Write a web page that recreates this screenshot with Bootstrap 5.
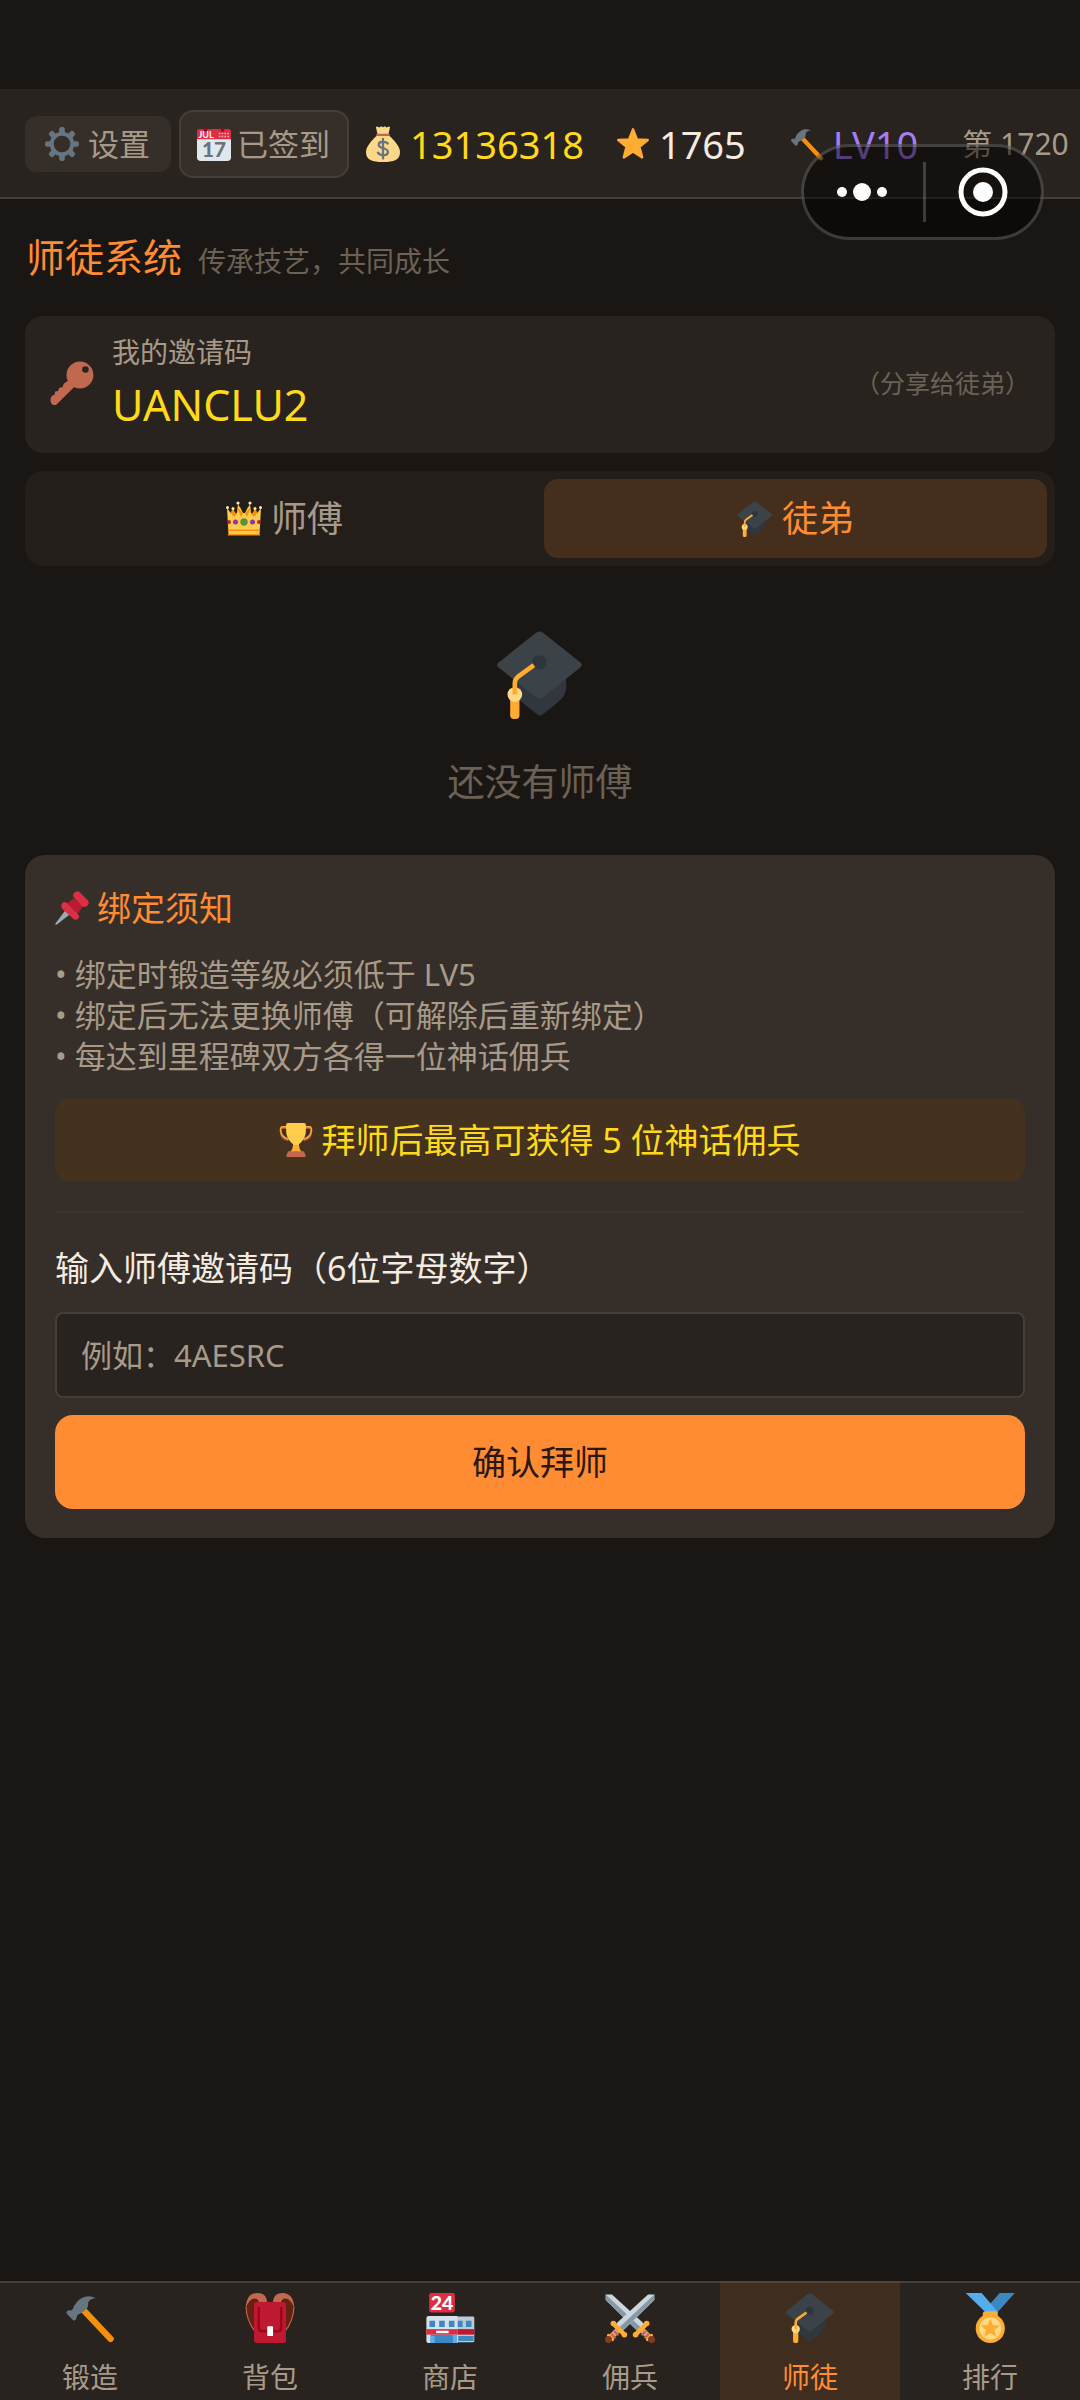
<!DOCTYPE html>
<html lang="zh-CN">
<head>
<meta charset="utf-8">
<meta name="viewport" content="width=device-width, initial-scale=1">
<title>师徒系统</title>
<link href="https://cdn.jsdelivr.net/npm/bootstrap@5.3.0/dist/css/bootstrap.min.css" rel="stylesheet">
<style>
:root{--ink:#1a1613;--bar:#28231f;--line:#443e39;--raised:#362f29;--muted:#a89a88;--dim:#6b6155;--orange:#ff8c33;--gold:#ffd91a;--light:#f5ebe0}
body{background:var(--ink);color:var(--light);font-family:"Noto Sans","Noto Sans CJK SC",sans-serif;font-size:31px;line-height:40px}
.page-shell{padding-top:89px}
.ico{display:block;flex:none;overflow:visible}
.i-34{width:34px;height:34px}.i-36{width:36px;height:36px}.i-44{width:44px;height:44px}.i-50{width:50px;height:50px}.i-88{width:88px;height:88px}
.top-bar{background:var(--bar);border-bottom:2px solid var(--line);height:110px;padding:2px 0 0 25px}
.bar-btn{background:var(--raised);color:var(--muted);border:0;border-radius:12px;font-size:31px;line-height:40px;gap:9px}
.bar-btn.set-btn{padding:8px 21px 8px 20px;margin-right:8px}
.bar-btn.sign-btn{padding:12px 17px 12px 16px;border:2px solid var(--line);border-radius:14px;gap:6px;margin-right:16px}
.stat{font-size:38px;line-height:40px;gap:9px;margin-right:44px}
.stat.coins{margin-right:32px}
.stage{font-size:30px}
.txt-gold{color:var(--gold)}.txt-muted{color:var(--muted)}.txt-dim{color:var(--dim)}.txt-orange{color:var(--orange)}.txt-violet{color:#a67cf5}
.capsule{top:144px;right:36px;width:243px;height:96px;border-radius:48px;background:rgba(0,0,0,.5);border:3px solid rgba(255,255,255,.2)}
.capsule button{background:none;border:0;padding:0 3px 0 0;height:60px}
.capsule button+button{border-left:3px solid rgba(255,255,255,.2);padding:0}
main{padding:0 25px}
.page-title{font-size:39px;line-height:50px;font-weight:400}
.fs-sub{font-size:28px;line-height:36px}
.fs-hint{font-size:25px;line-height:36px}
.title-row{padding:33px 0 34px 1px}
.code-box{background:#28231e;border-radius:18px;padding:18px 25px 22px;gap:18px}
.code-text{font-size:43px;line-height:52px;margin-top:9px}
.tab-box{background:#231e1a;border-radius:18px;padding:8px;margin-top:18px;gap:8px}
.tab-box .nav-link{color:var(--muted);font-size:36px;line-height:47px;padding:16px;border-radius:14px;gap:9px;border:0;background:none}
.tab-box .nav-link.active{background:#462e1d;color:var(--orange)}
.empty-box{padding:65px 0 49px;font-size:37px;line-height:48px;gap:39px}
.info-card{background:var(--raised);border:0;border-radius:20px;padding:29px 30px}
.fs-item{font-size:34px;line-height:48px;font-weight:400}
.rules{font-size:31px;line-height:41px;margin:22px 0}
.reward{background:#44321f;color:var(--gold);border-radius:14px;padding:17px;gap:8px}
.split{border-top:2px solid #3c342f;opacity:1;margin:30px 0 31px}
.code-input{background:#28231f;color:var(--light);border:2px solid var(--line);border-radius:8px;padding:21px 24px;font-size:31px;line-height:40px;margin:20px 0 17px}
.code-input::placeholder{color:var(--muted);opacity:1}
.code-input:focus{background:#28231f;color:var(--light);border-color:var(--orange);box-shadow:none}
.go-btn,.go-btn:hover{background:var(--orange);color:#2a1810;border:0;border-radius:18px;padding:23px}
.tab-bar{background:var(--bar);height:119px}
.tab-bar a{color:var(--muted);text-decoration:none;font-size:28px;line-height:36px;border-top:2px solid var(--line);padding:10px 0 0;gap:16px;flex:1 1 0}
.tab-bar a.active{background:#3f2d20;color:var(--orange);border-color:#58432f}
</style>
<script src="https://cdn.jsdelivr.net/npm/bootstrap@5.3.0/dist/js/bootstrap.bundle.min.js"></script>
</head>
<body>
<svg width="0" height="0" class="position-absolute" aria-hidden="true">
<defs>
<symbol id="cap" viewBox="0 0 36 36"><path fill="#31373d" d="M7.5 17h20.200c.8 1.500 1.100 3 1.100 5 0 3.500-1.300 5.500-3.600 7.200l-6 4.900q-1.200 1-2.400 0l-9.300-7.400z"/><path fill="#3b4349" d="M1.100 14.900q-1.300-1 0-2L16.200.8q1.600-1.200 3.200 0l15.100 12.100q1.300 1 0 2L19.400 27q-1.600 1.200-3.200 0z"/><circle cx="17.700" cy="12.900" r="3" fill="#2f363b"/><rect x="5.800" y="26" width="3.800" height="10" rx="1.500" fill="#ffac33"/><circle cx="7.700" cy="26" r="3" fill="#ffd983"/><path d="M15.500 14 8.900 18.800q-1.200 1-1.200 2.600V26" fill="none" stroke="#ffac33" stroke-width="1.900"/></symbol>
<symbol id="hammer" viewBox="0 0 36 36"><path d="M13 12 32.800 33" stroke="#f4900c" stroke-width="4.600" stroke-linecap="round"/><path fill="#66757f" d="M1 14.600q0-2 2-2.200l2 .1q.8-1 1.500-3.200Q8.500 5.500 12 3.600 17 1 22.400 3.800c-3.500 0-6 1.700-5.800 4.800q.2 1.800-2.200 3.900-2.200 2-4.600 2.800-1.500.4-1.400 2.500-.2 1.600-2.200 2.200z"/></symbol>
<symbol id="gear" viewBox="0 0 36 36"><g fill="#66757f"><rect x="15" y="0" width="6" height="36" rx="2.500"/><rect x="15" y="0" width="6" height="36" rx="2.500" transform="rotate(45 18 18)"/><rect x="15" y="0" width="6" height="36" rx="2.500" transform="rotate(90 18 18)"/><rect x="15" y="0" width="6" height="36" rx="2.500" transform="rotate(135 18 18)"/><circle cx="18" cy="18" r="13"/></g><circle cx="18" cy="18" r="8.800" fill="#362f29"/></symbol>
<symbol id="bag" viewBox="0 0 36 36"><path fill="#fdd888" d="M12 9.500C6 15 1 21 1 26c0 8 6 10 17 10s17-2 17-10c0-5-5-11-11-16.500z"/><path fill="#fdd888" d="M12.500 8 11 1.500q0-1.500 1.700-.8l1.800.7L16 .3l2 .9L20 .3l1.500 1.100 1.800-.7q1.700-.7 1.700.8L23.500 8z"/><path d="M12 8.700h12" stroke="#bf6952" stroke-width="2" stroke-linecap="round"/><path d="M22.700 17.500c-1.200-1.800-8.800-3.200-9 1.200 0 4.800 9.200 2.300 9.200 7.200 0 4.300-8 4-10 .8M18 13v19.500" fill="none" stroke="#67757f" stroke-width="2.300" stroke-linecap="round"/></symbol>
<symbol id="star" viewBox="0 0 36 36"><path fill="#ffac33" stroke="#ffac33" stroke-width="2.600" stroke-linejoin="round" d="m18 2.500 4.200 10.600 11.400.7-8.800 7.200 2.900 11.200L18 26l-9.700 6.200L11.200 21l-8.800-7.200 11.400-.7z"/></symbol>
<symbol id="cal" viewBox="0 0 36 36"><path fill="#e1e8ed" d="M0 11h36v21q0 4-4 4H4q-4 0-4-4z"/><path fill="#dd2e44" d="M0 13V5q0-3 3-3h30q3 0 3 3v8z"/><path fill="#7c1626" d="M7 0h4v3a2 2 0 0 1-4 0zm18 0h4v3a2 2 0 0 1-4 0z"/><path d="M23 7h11M23 10h11" stroke="#f4abba" stroke-width="1.600" stroke-dasharray="1.800 1.200"/><text x="1.500" y="11.500" font-size="9.500" font-weight="700" fill="#fff" font-family="Lato,sans-serif">JUL</text><text x="18" y="32" text-anchor="middle" font-size="22" font-weight="900" fill="#66757f" font-family="Lato,sans-serif">17</text></symbol>
<symbol id="key" viewBox="0 0 36 36"><g fill="#c1694f"><circle cx="24.500" cy="11.500" r="11"/><path d="m15 16 5 5L6 35q-2 2-4 .500T.500 31l1-2.500 2.200-.8.500-2.700 2.400-.5 1-2.600 2.400-.4 1.500-3z"/></g><circle cx="29" cy="7" r="2.700" fill="#28241e"/></symbol>
<symbol id="crown" viewBox="0 0 36 36"><path fill="#f4900c" d="m3 15 4-8 4 9 3-10 4 9 4-9 3 10 4-9 4 8v9H3z"/><path fill="#ffcc4d" d="M2.500 33 1 7l6 8 4-3 1-9 5 9h2l5-9 1 9 4 3 6-8-1.500 26z"/><g fill="#ffe8b6"><circle cx="1.500" cy="6.500" r="1.500"/><circle cx="7" cy="7.500" r="1.500"/><circle cx="12" cy="2" r="1.600"/><circle cx="24" cy="2" r="1.600"/><circle cx="29" cy="7.500" r="1.500"/><circle cx="34.500" cy="6.500" r="1.500"/></g><path fill="#f4900c" d="m6 9 2 7 3-3zm5-3 4 10 2-4zm14 0-4 10-2-4zm5 3-2 7-3-3zM2 28.500h32v1.600H2zM2 33h32v1.500H2z"/><circle cx="18" cy="21" r="3.700" fill="#5c913b"/><circle cx="9.500" cy="21" r="2.500" fill="#9531b3"/><circle cx="26.500" cy="21" r="2.500" fill="#9531b3"/><circle cx="3" cy="21" r="1.900" fill="#be1931"/><circle cx="33" cy="21" r="1.900" fill="#be1931"/></symbol>
<symbol id="pin" viewBox="0 0 36 36"><path fill="#99aab5" d="m11 20.500 4.500 4.500L2 35.500q-2 .8-1.500-1z"/><path fill="#be1931" d="m20 8 9 9-5 7-11-11z"/><path fill="#dd2e44" d="M20 2q3-3 6-1l9 9q2 3-1 6-3 2-6 0l-7-8q-3-3-1-6zM7 14q2-4 6-1l11 11q3 3 0 6-3 1-5-1L8 19q-2-2-1-5z"/></symbol>
<symbol id="cup" viewBox="0 0 36 36"><path d="M9 5H3.500Q1.500 5 1.700 8 2 17 10 18M27 5h5.500q2 0 1.800 3Q34 17 26 18" fill="none" stroke="#c1694f" stroke-width="2.200"/><path d="M9 4H3.500Q1.500 4 1.700 7 2 15 10 17M27 4h5.500q2 0 1.800 3Q34 15 26 17" fill="none" stroke="#ffac33" stroke-width="1.400"/><path fill="#ffac33" d="M15 21h6q0 8 4 10H11q4-2 4-10z"/><path fill="#ffcc4d" d="M7.500 2q0-2 2-2h17q2 0 2 2v6c0 7-4 12-8 15h-5c-4-3-8-8-8-15z"/><path fill="#c1694f" d="M10.500 30h15q1.500 0 1.500 1.500v1h1V36H8v-3.500h1v-1Q9 30 10.500 30z"/></symbol>
<symbol id="pack" viewBox="0 0 36 36"><path fill="#662113" d="M9 1Q0 5 1 12q1 10 7 16zM27 1q9 4 8 11-1 10-7 16z"/><path d="M7.500 28Q1 20 .8 10M28.500 28Q35 20 35.200 10" fill="none" stroke="#c1694f" stroke-width=".8"/><path fill="#c1694f" d="M.5 11Q1 0 9 0q7 0 7 8h-6q0-4-3-4-4 0-6.500 7zm35 0Q35 0 27 0q-7 0-7 8h6q0-4 3-4 4 0 6.500 7z"/><rect x="6.500" y="6.500" width="23" height="29.500" rx="2" fill="#be1931"/><path d="M9.900 10v15q0 2.600 2.600 2.600h11q2.600 0 2.600-2.600V10" fill="none" stroke="#a0041e" stroke-width="1.800"/><rect x="16" y="24" width="4.200" height="7" rx=".6" fill="#fff"/></symbol>
<symbol id="shop" viewBox="0 0 36 36"><rect x="23" y="17" width="12.500" height="18.500" rx="1" fill="#bdc9d3"/><path fill="#d5e0e8" d="M1 18q0-1.500 1.500-1.500h21V36h-21Q1 36 1 34.500z"/><path fill="#3b88c3" d="M3.200 20h4v4.500h-4zm7 0h4v4.500h-4zm7 0h4v4.500h-4zm6.400 0h3.500v4.500h-3.500zm5.900 0h4v4.500h-4zM4 30h17v6H4zm20 1h11v3.500H24z"/><path fill="#dd2e44" d="M1 26h22.500v4H1z"/><path fill="#be1931" d="M23.500 26h12v4h-12z"/><path fill="#fff" d="M8 27.200h9v1.700H8z"/><path fill="#5dadec" d="M4 31h3v5H4zm16-1h3v6h-3z"/><rect x="3" y="0" width="18.500" height="14" rx="1.500" fill="#dd2e44"/><text x="12.200" y="12" text-anchor="middle" font-size="14" font-weight="900" fill="#fff" font-family="Lato,sans-serif">24</text></symbol>
<symbol id="blade" viewBox="0 0 36 36"><path fill="#ccd6dd" d="M35.500 1v4L12.500 27.500l-5-5L31 1z"/><path fill="#8899a6" d="M35.500 1v4L12.500 27.500 10 25z"/><path d="m3 33 6-6" stroke="#d99e82" stroke-width="4"/><path d="m4.500 29.500 3 3m-.9-5 3 3" stroke="#c1694f" stroke-width="1.500"/><path d="m6 22 8 8" stroke="#ffac33" stroke-width="3.200" stroke-linecap="round"/><circle cx="6" cy="22" r="2" fill="#ffac33"/><circle cx="14" cy="30" r="2" fill="#ffac33"/><path d="m2.500 30.500 3 3" stroke="#ffac33" stroke-width="2.200" stroke-linecap="round"/><circle cx="2.500" cy="33.500" r="2.500" fill="#853b22"/></symbol>
<symbol id="swords" viewBox="0 0 36 36"><use href="#blade" transform="matrix(-1 0 0 1 36 0)" width="36" height="36"/><use href="#blade" width="36" height="36"/></symbol>
<symbol id="medal" viewBox="0 0 36 36"><path fill="#3b88c3" d="M25 0h10.800L22.500 15 17 9z"/><path fill="#55acee" d="M.5 0H12l12 14-7 2z"/><rect x="12.800" y="13.200" width="10.800" height="6" rx="2" fill="#f4b04b"/><circle cx="18.200" cy="25.500" r="10.500" fill="#ffac33"/><circle cx="18.200" cy="25.500" r="7.900" fill="#ffd983"/><path fill="#ffac33" d="m18.200 18.500 1.900 4.600 5 .3-3.900 3.200 1.300 4.900-4.300-2.700-4.300 2.700 1.300-4.900-3.900-3.200 5-.3z"/></symbol>
</defs>
</svg>
<div class="page-shell d-flex flex-column min-vh-100 position-relative overflow-hidden">
  <header class="top-bar d-flex align-items-center text-nowrap overflow-hidden">
    <button type="button" class="bar-btn set-btn d-flex align-items-center flex-shrink-0"><svg class="ico i-34"><use href="#gear"/></svg>设置</button>
    <button type="button" class="bar-btn sign-btn d-flex align-items-center flex-shrink-0"><svg class="ico i-34"><use href="#cal"/></svg>已签到</button>
    <div class="stat coins d-flex align-items-center txt-gold"><svg class="ico i-36"><use href="#bag"/></svg><span>13136318</span></div>
    <div class="stat d-flex align-items-center"><svg class="ico i-34"><use href="#star"/></svg><span>1765</span></div>
    <div class="stat d-flex align-items-center txt-violet"><svg class="ico i-34"><use href="#hammer"/></svg><span>LV10</span></div>
    <div class="stage txt-muted">第 1720</div>
  </header>
  <div class="capsule position-absolute d-flex align-items-center">
    <button type="button" class="w-50 d-flex align-items-center justify-content-center" aria-label="更多"><svg class="ico" width="52" height="20"><g fill="#fff"><circle cx="6" cy="10" r="5"/><circle cx="26" cy="10" r="9"/><circle cx="46" cy="10" r="5"/></g></svg></button>
    <button type="button" class="w-50 d-flex align-items-center justify-content-center" aria-label="关闭"><svg class="ico" width="50" height="50"><circle cx="25" cy="25" r="22" fill="none" stroke="#fff" stroke-width="5"/><circle cx="25" cy="25" r="10" fill="#fff"/></svg></button>
  </div>
  <main class="flex-grow-1">
    <div class="title-row d-flex align-items-baseline gap-3">
      <h1 class="page-title txt-orange m-0">师徒系统</h1><span class="fs-sub txt-dim">传承技艺，共同成长</span>
    </div>
    <section class="code-box d-flex align-items-center">
      <svg class="ico i-44"><use href="#key"/></svg>
      <div class="flex-grow-1"><div class="fs-sub txt-muted">我的邀请码</div><div class="code-text txt-gold">UANCLU2</div></div>
      <span class="fs-hint txt-dim">（分享给徒弟）</span>
    </section>
    <div class="tab-box nav nav-fill flex-nowrap" role="tablist">
      <button type="button" role="tab" class="nav-link w-50 d-flex align-items-center justify-content-center"><svg class="ico i-36"><use href="#crown"/></svg>师傅</button>
      <button type="button" role="tab" aria-selected="true" class="nav-link active w-50 d-flex align-items-center justify-content-center"><svg class="ico i-36"><use href="#cap"/></svg>徒弟</button>
    </div>
    <section class="empty-box d-flex flex-column align-items-center txt-dim">
      <svg class="ico i-88"><use href="#cap"/></svg><div>还没有师傅</div>
    </section>
    <section class="info-card card">
      <h2 class="fs-item txt-orange d-flex align-items-center gap-2 m-0"><svg class="ico i-34"><use href="#pin"/></svg>绑定须知</h2>
      <div class="rules txt-muted">
        <div>• 绑定时锻造等级必须低于 LV5</div>
        <div>• 绑定后无法更换师傅（可解除后重新绑定）</div>
        <div>• 每达到里程碑双方各得一位神话佣兵</div>
      </div>
      <div class="reward fs-item d-flex align-items-center justify-content-center"><svg class="ico i-34"><use href="#cup"/></svg>拜师后最高可获得 5 位神话佣兵</div>
      <hr class="split">
      <label for="invite" class="fs-item">输入师傅邀请码（6位字母数字）</label>
      <input id="invite" type="text" class="code-input form-control" maxlength="6" placeholder="例如：4AESRC">
      <button type="button" class="go-btn btn fs-item w-100">确认拜师</button>
    </section>
  </main>
  <nav class="tab-bar d-flex">
    <a href="#" class="d-flex flex-column align-items-center"><svg class="ico i-50"><use href="#hammer"/></svg>锻造</a>
    <a href="#" class="d-flex flex-column align-items-center"><svg class="ico i-50"><use href="#pack"/></svg>背包</a>
    <a href="#" class="d-flex flex-column align-items-center"><svg class="ico i-50"><use href="#shop"/></svg>商店</a>
    <a href="#" class="d-flex flex-column align-items-center"><svg class="ico i-50"><use href="#swords"/></svg>佣兵</a>
    <a href="#" class="active d-flex flex-column align-items-center" aria-current="page"><svg class="ico i-50"><use href="#cap"/></svg>师徒</a>
    <a href="#" class="d-flex flex-column align-items-center"><svg class="ico i-50"><use href="#medal"/></svg>排行</a>
  </nav>
</div>
</body>
</html>
